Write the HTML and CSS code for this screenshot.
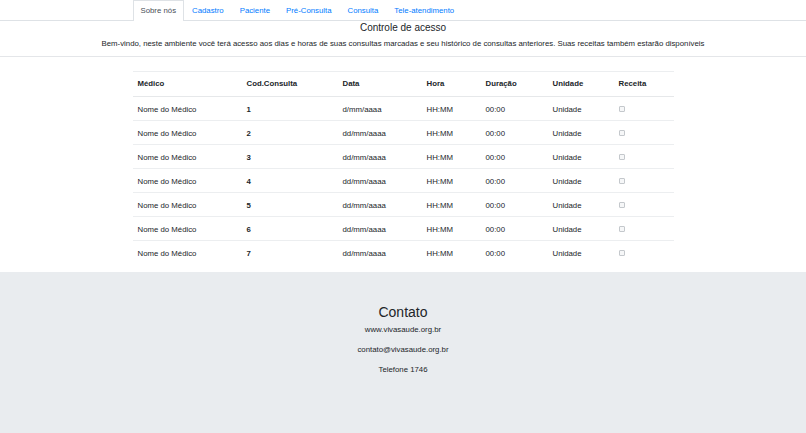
FILE: index.html
```html
<!DOCTYPE html>
<html lang="pt-BR">
<head>
<meta charset="utf-8">
<title>Controle de acesso</title>
<link rel="stylesheet" href="styles.css">
</head>
<body>
<header class="topbar">
  <ul class="tabs">
    <li><a class="tab active" href="#">Sobre nós</a></li>
    <li><a class="tab" href="#">Cadastro</a></li>
    <li><a class="tab" href="#">Paciente</a></li>
    <li><a class="tab" href="#">Pré-Consulta</a></li>
    <li><a class="tab" href="#">Consulta</a></li>
    <li><a class="tab" href="#">Tele-atendimento</a></li>
  </ul>
</header>
<main class="content">
  <h5 class="title">Controle de acesso</h5>
  <p class="intro">Bem-vindo, neste ambiente você terá acesso aos dias e horas de suas consultas marcadas e seu histórico de consultas anteriores. Suas receitas também estarão disponíveis</p>
  <hr class="rule">
  <div class="container">
    <table class="grid">
      <colgroup>
        <col class="c1"><col class="c2"><col class="c3"><col class="c4"><col class="c5"><col class="c6"><col class="c7">
      </colgroup>
      <thead>
        <tr><th>Médico</th><th>Cod.Consulta</th><th>Data</th><th>Hora</th><th>Duração</th><th>Unidade</th><th>Receita</th></tr>
      </thead>
      <tbody>
        <tr><td>Nome do Médico</td><td class="b">1</td><td>d/mm/aaaa</td><td>HH:MM</td><td>00:00</td><td>Unidade</td><td><span class="check"></span></td></tr>
        <tr><td>Nome do Médico</td><td class="b">2</td><td>dd/mm/aaaa</td><td>HH:MM</td><td>00:00</td><td>Unidade</td><td><span class="check"></span></td></tr>
        <tr><td>Nome do Médico</td><td class="b">3</td><td>dd/mm/aaaa</td><td>HH:MM</td><td>00:00</td><td>Unidade</td><td><span class="check"></span></td></tr>
        <tr><td>Nome do Médico</td><td class="b">4</td><td>dd/mm/aaaa</td><td>HH:MM</td><td>00:00</td><td>Unidade</td><td><span class="check"></span></td></tr>
        <tr><td>Nome do Médico</td><td class="b">5</td><td>dd/mm/aaaa</td><td>HH:MM</td><td>00:00</td><td>Unidade</td><td><span class="check"></span></td></tr>
        <tr><td>Nome do Médico</td><td class="b">6</td><td>dd/mm/aaaa</td><td>HH:MM</td><td>00:00</td><td>Unidade</td><td><span class="check"></span></td></tr>
        <tr><td>Nome do Médico</td><td class="b">7</td><td>dd/mm/aaaa</td><td>HH:MM</td><td>00:00</td><td>Unidade</td><td><span class="check"></span></td></tr>
      </tbody>
    </table>
  </div>
</main>
<footer class="footer">
  <h3 class="f-title">Contato</h3>
  <p class="f-line">www.vivasaude.org.br</p>
  <p class="f-line">contato@vivasaude.org.br</p>
  <p class="f-line">Telefone 1746</p>
</footer>
</body>
</html>
```

FILE: styles.css
```css
html, body {
  margin: 0;
  padding: 0;
  height: 100%;
}
body {
  font-family: "Liberation Sans", Arial, sans-serif;
  font-size: 7.8px;
  line-height: 12px;
  color: #212529;
  background: #fff;
  display: flex;
  flex-direction: column;
}
.topbar {
  border-bottom: 1px solid #dee2e6;
  height: 20px;
}
.tabs {
  list-style: none;
  margin: 0 auto;
  padding: 0;
  width: 541px;
  display: flex;
}
.tab {
  display: block;
  box-sizing: border-box;
  height: 20px;
  padding: 4px 7px;
  line-height: 11px;
  border: 1px solid transparent;
  border-bottom: 0;
  color: #007bff;
  text-decoration: none;
}
.tab.active {
  color: #495057;
  background: #fff;
  border-color: #dee2e6;
  height: 21px;
}
.content {
  padding-top: 1px;
}
.title {
  margin: 0;
  font-size: 10px;
  line-height: 12px;
  font-weight: normal;
  text-align: center;
}
.intro {
  margin: 4px 0 0;
  text-align: center;
}
.rule {
  margin: 6px 0 0;
  border: 0;
  border-top: 1px solid #e4e6e9;
  height: 0;
}
.container {
  width: 541px;
  margin: 14px auto 0;
}
.grid {
  width: 541px;
  border-collapse: collapse;
  table-layout: fixed;
  margin-bottom: 8px;
}
.c1 { width: 109px; }
.c2 { width: 96px; }
.c3 { width: 84px; }
.c4 { width: 59px; }
.c5 { width: 67px; }
.c6 { width: 66px; }
.c7 { width: 60px; }
.grid th {
  text-align: left;
  font-weight: bold;
  padding: 6px 5px;
  border-top: 1px solid #eceef0;
  border-bottom: 1px solid #e6e8ea;
}
.grid td {
  padding: 7px 5px 4px;
  border-top: 1px solid #eceef0;
}
.grid td.b {
  font-weight: bold;
}
.check {
  display: inline-block;
  width: 4px;
  height: 4px;
  border: 1px solid #c4c8cc;
  border-radius: 1px;
  background: #f6f7f8;
  vertical-align: 0;
}
.footer {
  flex: 1;
  background: #e9ecef;
  text-align: center;
  padding-top: 32px;
}
.f-title {
  margin: 0 0 3px;
  font-size: 14px;
  line-height: 17px;
  font-weight: normal;
}
.f-line {
  margin: 0 0 8px;
}
```
